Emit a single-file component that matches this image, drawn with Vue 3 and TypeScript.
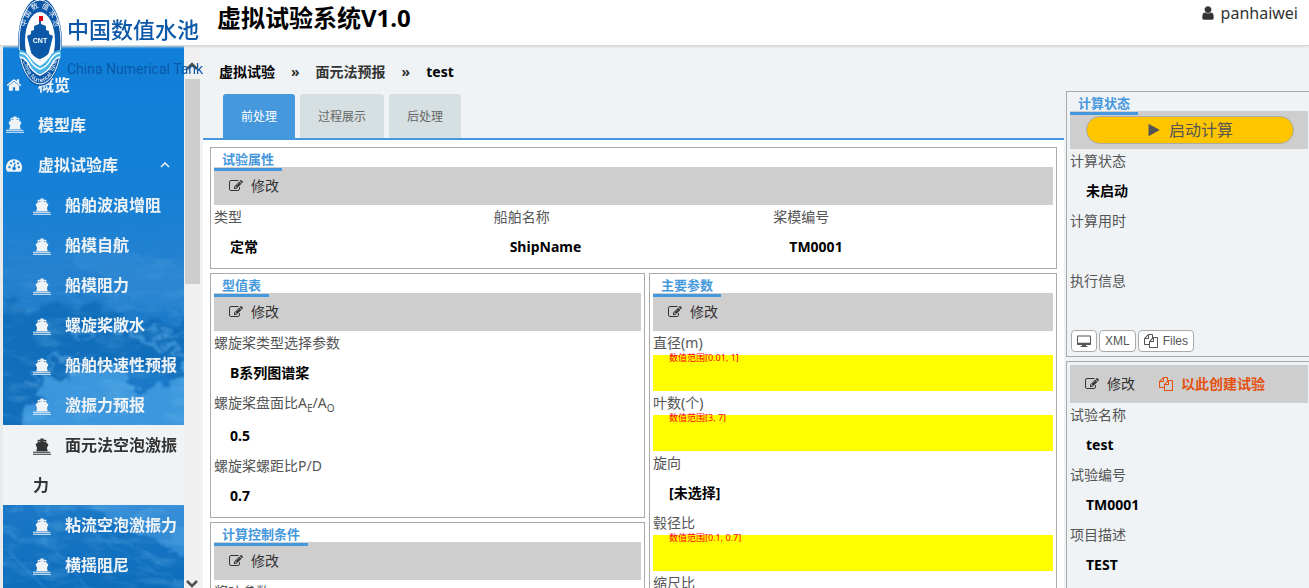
<script setup lang="ts">
import { h, type FunctionalComponent } from 'vue'

const glyphs: Record<string, string> = {
  home: 'M1472 992v480q0 26-19 45t-45 19h-384v-384h-256v384h-384q-26 0-45-19t-19-45v-480q0-1 .5-3t.5-3l575-474 575 474q1 2 1 6zm223-69l-62 74q-8 9-21 11h-3q-13 0-21-7l-692-577-692 577q-12 8-24 7-13-2-21-11l-62-74q-8-10-7-23.5t11-21.5l719-599q32-26 76-26t76 26l244 204v-195q0-14 9-23t23-9h192q14 0 23 9t9 23v408l219 182q10 8 11 21.5t-7 23.5z',
  edit: 'M888 1184l116-116-152-152-116 116v56h96v96h56zm440-720q-16-16-33 1l-350 350q-17 17-1 33t33-1l350-350q17-17 1-33zm80 594v190q0 119-84.5 203.5t-203.5 84.5h-832q-119 0-203.5-84.5t-84.5-203.5v-832q0-119 84.5-203.5t203.5-84.5h832q63 0 117 25 15 7 18 23 3 17-9 29l-49 49q-14 14-32 8-23-6-45-6h-832q-66 0-113 47t-47 113v832q0 66 47 113t113 47h832q66 0 113-47t47-113v-126q0-13 9-22l64-64q15-15 35-7t20 29zm-96-738l288 288-672 672h-288v-288zm444 132l-92 92-288-288 92-92q28-28 68-28t68 28l152 152q28 28 28 68t-28 68z',
  user: 'M1536 1399q0 109-62.5 187t-150.5 78h-854q-88 0-150.5-78t-62.5-187q0-85 8.5-160.5t31.5-152 58.5-131 94-89 134.5-34.5q131 128 313 128t313-128q76 0 134.5 34.5t94 89 58.5 131 31.5 152 8.5 160.5zm-256-887q0 159-112.5 271.5t-271.5 112.5-271.5-112.5-112.5-271.5 112.5-271.5 271.5-112.5 271.5 112.5 112.5 271.5z',
  play: 'M1576 927l-1328 738q-23 13-39.5 3t-16.5-36v-1472q0-26 16.5-36t39.5 3l1328 738q23 13 23 31t-23 31z',
  files: 'M1696 384q40 0 68 28t28 68v1216q0 40-28 68t-68 28h-960q-40 0-68-28t-28-68v-288h-544q-40 0-68-28t-28-68v-672q0-40 20-88t48-76l408-408q28-28 76-48t88-20h416q40 0 68 28t28 68v328q68-40 128-40h416zm-544 213l-299 299h299v-299zm-640-384l-299 299h299v-299zm196 647l316-316v-416h-384v416q0 40-28 68t-68 28h-416v640h512v-256q0-40 20-88t48-76zm956 804v-1152h-384v416q0 40-28 68t-68 28h-416v640h896z',
  desktop: 'M100 200h1592q100 0 100 100v1000q0 100-100 100h-540v130h190v134H450v-134h190v-130H100q-100 0-100-100V300q0-100 100-100zM130 330v800h1532V330z',
  ship: 'M740 60h312v110h190q90 0 90 90v240l170 90q40 20 24 70l-140 330 80 330H326l80-330-140-330q-16-50 24-70l170-90V260q0-90 90-90h190zM560 290v120l336-130 336 130V290zM0 1400l75-60 75 60 75-60 75 60 75-60 75 60 75-60 75 60 75-60 75 60 75-60 75 60 75-60 75 60 75-60 75 60 75-60 75 60 75-60 75 60 75-60 75 60 67-60v100l-67 60-75-60-75 60-75-60-75 60-75-60-75 60-75-60-75 60-75-60-75 60-75-60-75 60-75-60-75 60-75-60-75 60-75-60-75 60-75-60-75 60-75-60-75 60zM0 1570h1792v90H0z',
  dashboard: 'M896 256a896 896 0 0 1 760 1370q-28 38-80 38H216q-52 0-80-38A896 896 0 0 1 896 256zM384 1020a128 128 0 1 0 .1 256 128 128 0 1 0-.1-256zM576 580a128 128 0 1 0 .1 256 128 128 0 1 0-.1-256zM896 390a128 128 0 1 0 .1 256 128 128 0 1 0-.1-256zM1344 580a128 128 0 1 0 .1 256 128 128 0 1 0-.1-256zM1440 1020a128 128 0 1 0 .1 256 128 128 0 1 0-.1-256zM950 740l-90 360a190 190 0 1 0 150 30l90-370z',
}

const Icon: FunctionalComponent<{ name: string }> = (props) =>
  h('svg', { viewBox: '0 0 1792 1792', fill: 'currentColor', 'fill-rule': 'evenodd', 'aria-hidden': 'true' }, [
    h('path', { d: glyphs[props.name] }),
  ])
Icon.props = ['name']

interface Field {
  label: string
  value?: string
  range?: string
}

const subMenu = ['船舶波浪增阻', '船模自航', '船模阻力', '螺旋桨敞水', '船舶快速性预报', '激振力预报', '面元法空泡激振力', '粘流空泡激振力', '横摇阻尼']
const activeMenu = '面元法空泡激振力'
const tabs = ['前处理', '过程展示', '后处理']

const attributes: Field[] = [
  { label: '类型', value: '定常' },
  { label: '船舶名称', value: 'ShipName' },
  { label: '桨模编号', value: 'TM0001' },
]
const params: Field[] = [
  { label: '直径(m)', range: '数值范围[0.01, 1]' },
  { label: '叶数(个)', range: '数值范围[3, 7]' },
  { label: '旋向', value: '[未选择]' },
  { label: '毂径比', range: '数值范围[0.1, 0.7]' },
  { label: '缩尺比', value: '' },
]
const status: Field[] = [
  { label: '计算状态', value: '未启动' },
  { label: '计算用时', value: '' },
  { label: '执行信息', value: '' },
]
const info: Field[] = [
  { label: '试验名称', value: 'test' },
  { label: '试验编号', value: 'TM0001' },
  { label: '项目描述', value: 'TEST' },
]
</script>

<template>
  <div class="app">
    <header class="header">
      <h1>虚拟试验系统V1.0</h1>
      <a class="user" href="#"><Icon name="user" class="icon" />panhaiwei</a>
      <svg class="logo" width="204" height="90" viewBox="0 0 204 90" role="img" aria-label="中国数值水池">
        <defs>
          <path id="arc-top" d="M24 43C24 -4 56 -4 56 43" />
          <path id="arc-bottom" d="M21 44C23 95 57 95 59 44" />
        </defs>
        <ellipse cx="40" cy="42" rx="22" ry="44" fill="#0b57a8" />
        <ellipse cx="40" cy="42" rx="21" ry="42" fill="none" stroke="#fff" stroke-width="1" />
        <ellipse cx="40" cy="41" rx="15" ry="29" fill="#fff" />
        <text class="ring" fill="#fff" font-size="7"><textPath href="#arc-top" startOffset="50%" text-anchor="middle">中 国 数 值 水 池</textPath></text>
        <text class="ring" fill="#fff" font-size="6"><textPath href="#arc-bottom" startOffset="50%" text-anchor="middle">China Numerical Tank</textPath></text>
        <rect x="39" y="16" width="4" height="5" fill="#e60012" />
        <path d="M39 21h2v3l5 2v4l3 1v3l4 2-5 20-8 5-8-5-5-20 4-2v-3l3-1v-4l5-2z" fill="#0b57a8" />
        <path d="M19 50q6-1 10 6 5 7 11 10 7-4 11-11 4-5 10-5v8q-7-1-10 6-4 8-11 10-9-3-12-10-3-6-9-6z" fill="#46b4e8" />
        <path d="M20 53q6 0 9 6 5 8 11 10 7-2 11-10 4-6 9-6M20 57q5 1 8 6 4 9 12 12 8-3 12-11 3-6 8-7M31 54q4 5 9 6 6-2 10-7" fill="none" stroke="#fff" stroke-width="1.500" />
        <text class="ring" x="40" y="43" fill="#fff" font-size="7" font-weight="bold" text-anchor="middle">CNT</text>
        <text class="brand" x="67" y="38">中国数值水池</text>
        <text class="brand-en" x="67" y="74">China Numerical Tank</text>
      </svg>
    </header>

    <div class="body">
      <nav class="sidebar">
        <svg class="sea" preserveAspectRatio="none" viewBox="0 0 181 542" aria-hidden="true">
          <defs>
            <linearGradient id="sea-base" x1="0" y1="0" x2="0" y2="1">
              <stop offset="0" stop-color="#107fd9" />
              <stop offset=".26" stop-color="#1580d6" />
              <stop offset=".42" stop-color="#2581cf" />
              <stop offset=".55" stop-color="#1878c7" />
              <stop offset=".8" stop-color="#1e7bcb" />
              <stop offset="1" stop-color="#0d6dbb" />
            </linearGradient>
            <linearGradient id="fade" x1="0" y1="0" x2="0" y2="1">
              <stop offset="0" stop-color="#fff" stop-opacity="0" />
              <stop offset=".3" stop-color="#fff" />
            </linearGradient>
            <mask id="grain-mask"><rect y="170" width="181" height="372" fill="url(#fade)" /></mask>
            <filter id="rough" x="-10%" y="-10%" width="120%" height="120%">
              <feTurbulence type="fractalNoise" baseFrequency=".05 .08" numOctaves="4" seed="8" result="n" />
              <feDisplacementMap in="SourceGraphic" in2="n" scale="34" />
              <feGaussianBlur stdDeviation="1" />
            </filter>
            <filter id="grain" x="0" y="0" width="100%" height="100%">
              <feTurbulence type="fractalNoise" baseFrequency=".03 .09" numOctaves="4" seed="3" />
              <feColorMatrix values="0 0 0 0 .3  0 0 0 0 .65  0 0 0 0 .92  2.400 0 0 0 -1.100" />
            </filter>
          </defs>
          <rect width="181" height="542" fill="url(#sea-base)" />
          <g filter="url(#rough)">
            <path d="M-10 270Q30 255 70 258T120 272T200 270V340Q140 310 100 325T30 365L-10 400z" fill="#0c6ab8" opacity=".8" />
            <path d="M100 190Q120 220 200 215V265Q140 265 110 240T60 215z" fill="#3c92d9" opacity=".35" />
            <path d="M15 400Q20 335 75 325T130 340T200 310V400z" fill="#409adf" opacity=".9" />
            <path d="M70 290L110 282L145 292L190 285M100 275L155 300L195 310M20 335L60 312L90 318" fill="none" stroke="#4c9fdf" stroke-width="3" opacity=".7" />
            <path d="M80 455Q120 480 150 495T200 520V440H80z" fill="#3b92da" opacity=".8" />
            <path d="M-10 455L60 470L110 500L190 545M-10 480L50 500L90 550M10 510L50 550M30 455L90 475L160 520" fill="none" stroke="#3a90d7" stroke-width="2" opacity=".5" />
          </g>
          <g mask="url(#grain-mask)"><rect y="165" width="181" height="377" filter="url(#grain)" opacity=".22" /></g>
        </svg>
        <ul class="menu">
          <li><a href="#" class="item"><Icon name="home" class="icon" />概览</a></li>
          <li><a href="#" class="item"><Icon name="ship" class="icon wide" />模型库</a></li>
          <li>
            <a href="#" class="item">
              <Icon name="dashboard" class="icon" />虚拟试验库
              <svg class="caret" viewBox="0 0 10 6" aria-hidden="true"><path d="M1 5l4-4 4 4" fill="none" stroke="currentColor" stroke-width="1.500" /></svg>
            </a>
            <ul class="menu">
              <li v-for="name in subMenu" :key="name">
                <a href="#" class="sub" :class="{ active: name === activeMenu }"><Icon name="ship" class="icon" />{{ name }}</a>
              </li>
            </ul>
          </li>
        </ul>
      </nav>
      <div class="scrollbar" aria-hidden="true">
        <svg class="arrow" viewBox="0 0 12 8"><path d="M1 7l5-5 5 5" fill="none" stroke="#505050" stroke-width="2.500" /></svg>
        <div class="thumb"></div>
        <svg class="arrow" viewBox="0 0 12 8"><path d="M1 1l5 5 5-5" fill="none" stroke="#505050" stroke-width="2.500" /></svg>
      </div>

      <main class="main">
        <div class="crumbs">
          <span class="first">虚拟试验</span><span class="sep">»</span><a href="#">面元法预报</a><span class="sep">»</span><span class="first">test</span>
        </div>
        <div class="tabs">
          <button v-for="(tab, i) in tabs" :key="tab" type="button" :class="{ on: i === 0 }">{{ tab }}</button>
        </div>
        <div class="content">
          <section class="panel">
            <h2>试验属性</h2>
            <div class="bar"><button type="button"><Icon name="edit" class="icon" />修改</button></div>
            <dl class="thirds">
              <div v-for="f in attributes" :key="f.label"><dt>{{ f.label }}</dt><dd>{{ f.value }}</dd></div>
            </dl>
          </section>
          <div class="columns">
            <div class="column">
              <section class="panel">
                <h2>型值表</h2>
                <div class="bar"><button type="button"><Icon name="edit" class="icon" />修改</button></div>
                <dl>
                  <dt>螺旋桨类型选择参数</dt>
                  <dd>B系列图谱桨</dd>
                  <dt class="tall">螺旋桨盘面比A<sub>E</sub>/A<sub>O</sub></dt>
                  <dd>0.5</dd>
                  <dt>螺旋桨螺距比P/D</dt>
                  <dd>0.7</dd>
                </dl>
              </section>
              <section class="panel">
                <h2>计算控制条件</h2>
                <div class="bar"><button type="button"><Icon name="edit" class="icon" />修改</button></div>
                <dl><dt>桨叶参数</dt><dd></dd></dl>
              </section>
            </div>
            <section class="panel">
              <h2>主要参数</h2>
              <div class="bar"><button type="button"><Icon name="edit" class="icon" />修改</button></div>
              <dl>
                <template v-for="f in params" :key="f.label">
                  <dt>{{ f.label }}</dt>
                  <dd :class="{ missing: f.range }"><small v-if="f.range">{{ f.range }}</small>{{ f.value }}</dd>
                </template>
              </dl>
            </section>
          </div>
        </div>
      </main>

      <aside class="side">
        <section class="panel">
          <h2>计算状态</h2>
          <div class="bar"><button type="button" class="start"><Icon name="play" class="icon" />启动计算</button></div>
          <dl>
            <template v-for="f in status" :key="f.label"><dt>{{ f.label }}</dt><dd>{{ f.value }}</dd></template>
          </dl>
          <div class="tools">
            <button type="button" aria-label="显示"><Icon name="desktop" class="icon" /></button>
            <button type="button">XML</button>
            <button type="button"><Icon name="files" class="icon" />Files</button>
          </div>
        </section>
        <section class="panel">
          <div class="bar">
            <button type="button"><Icon name="edit" class="icon" />修改</button>
            <button type="button" class="create"><Icon name="files" class="icon" />以此创建试验</button>
          </div>
          <dl>
            <template v-for="f in info" :key="f.label"><dt>{{ f.label }}</dt><dd>{{ f.value }}</dd></template>
          </dl>
        </section>
      </aside>
    </div>
  </div>
</template>

<style>
body {
  margin: 0;
  overflow: hidden;
}
</style>

<style scoped>
* {
  box-sizing: border-box;
}
.app {
  display: flex;
  flex-direction: column;
  height: 100vh;
  overflow: hidden;
  background: #eff3f6;
  color: #555;
  font: 14px/24px "Noto Sans", "Noto Sans CJK SC", sans-serif;
}
button {
  font: inherit;
  color: inherit;
  border: 0;
  padding: 0;
  background: none;
  display: inline-flex;
  align-items: center;
  cursor: pointer;
}
a {
  color: inherit;
  text-decoration: none;
}
.icon {
  width: 14px;
  height: 14px;
  flex: none;
}
.header {
  position: relative;
  z-index: 2;
  flex: none;
  display: flex;
  justify-content: space-between;
  height: 46px;
  padding: 0 11px 0 217px;
  background: #fff;
  border-bottom: 1px solid #d3d7d6;
  box-shadow: 0 1px 2px #d8dcdc;
}
h1 {
  margin: 0;
  font-size: 24px;
  line-height: 36px;
  color: #000;
}
.user {
  display: flex;
  align-items: center;
  gap: 5px;
  height: 26px;
  font-size: 16px;
  color: #333;
}
.user .icon {
  width: 16px;
  height: 16px;
}
.logo {
  position: absolute;
  left: 0;
  top: 0;
}
.ring {
  font-family: "Liberation Sans", "Noto Sans CJK SC", sans-serif;
}
.brand {
  font: 500 22px "Noto Sans CJK SC", sans-serif;
  fill: #0b57a8;
}
.brand-en {
  font: 14px Roboto, sans-serif;
  fill: #0b57a8;
}
.body {
  flex: 1;
  min-height: 0;
  display: flex;
}
.sidebar {
  position: relative;
  flex: none;
  width: 184px;
  padding-top: 19px;
  border-left: 3px solid #e8ebec;
  overflow: hidden;
  font-size: 16px;
  font-weight: bold;
  color: #f0f3f6;
}
.sea {
  position: absolute;
  left: 0;
  top: 0;
  width: 100%;
  height: 100%;
}
.menu {
  position: relative;
  margin: 0;
  padding: 0;
  list-style: none;
}
.item {
  display: flex;
  align-items: center;
  height: 40px;
  padding: 0 14px 0 3px;
}
.item .icon {
  width: 16px;
  height: 16px;
  margin-right: 16px;
}
.item .wide {
  width: 18px;
  height: 18px;
  margin-right: 14px;
}
.caret {
  width: 10px;
  height: 6px;
  margin-left: auto;
}
.sub {
  display: block;
  line-height: 40px;
  padding: 0 4px 0 30px;
}
.sub .icon {
  width: 18px;
  height: 18px;
  margin-right: 14px;
  vertical-align: middle;
}
.sub.active {
  background: #eff3f6;
  color: #333;
}
.scrollbar {
  flex: none;
  display: flex;
  flex-direction: column;
  align-items: center;
  width: 16px;
  padding-top: 16px;
  background: #f0f0f0;
}
.arrow {
  width: 12px;
  height: 8px;
}
.thumb {
  width: 15px;
  height: 205px;
  margin: 9px 0 auto 1px;
  background: #cdcdcd;
}
.main {
  flex: 1;
  min-width: 0;
  margin-left: 3px;
}
.crumbs {
  display: flex;
  gap: 16px;
  padding: 14px 16px 10px;
  font-weight: bold;
  color: #333;
}
.first {
  color: #000;
}
.tabs {
  display: flex;
  gap: 5px;
  padding-left: 20px;
  border-bottom: 2px solid #4698dd;
}
.tabs button {
  height: 44px;
  padding: 2px 18px 0;
  border-radius: 3px 3px 0 0;
  background: #d6dfe1;
  font-size: 12px;
  color: #666;
}
.tabs .on {
  background: #4698dd;
  color: #fff;
}
.content {
  display: grid;
  gap: 4px;
  padding: 7px;
  background: #fff;
}
.columns {
  display: grid;
  grid-template-columns: 16fr 15fr;
  gap: 4px;
}
.column {
  display: grid;
  gap: 4px;
  align-content: start;
}
.panel {
  padding: 3px;
  border: 1px solid #aaa;
}
h2 {
  position: relative;
  width: fit-content;
  margin: 0 0 -4px;
  padding: 0 8px;
  border-bottom: 3px solid #4698dd;
  font-size: 13px;
  line-height: 17px;
  color: #4698dd;
}
.bar {
  display: flex;
  align-items: center;
  gap: 24px;
  height: 38px;
  padding: 0 15px;
  background: #cecece;
  color: #333;
}
.bar button {
  gap: 8px;
}
.bar .create {
  color: #e4500f;
  font-weight: bold;
}
.bar .start {
  flex: 1;
  justify-content: center;
  height: 28px;
  margin: 0 -1px 0 1px;
  border: 1px solid #aaa;
  border-radius: 14px;
  background: #ffc600;
  color: #555;
  font-size: 16px;
}
dl {
  margin: 0;
}
.thirds {
  display: grid;
  grid-template-columns: repeat(3, 1fr);
}
dt {
  height: 24px;
}
dt.tall {
  height: 27px;
}
sub {
  font-size: 10px;
  line-height: 1;
}
dd {
  position: relative;
  height: 36px;
  margin: 0;
  padding-left: 16px;
  line-height: 36px;
  font-weight: bold;
  color: #000;
}
.missing {
  background: #ff0;
}
small {
  position: absolute;
  top: -3px;
  font-size: 9px;
  line-height: 12px;
  font-weight: normal;
  color: #f00;
}
.side {
  flex: none;
  display: grid;
  gap: 4px;
  align-content: start;
  width: 243px;
  margin-left: 2px;
  padding-top: 45px;
}
.side .panel {
  padding-right: 1px;
  padding-bottom: 4px;
  border-right: 0;
}
.side .panel:last-child {
  padding-bottom: 16px;
}
.tools {
  display: flex;
  gap: 2px;
  padding: 1px 1px 0;
}
.tools button {
  gap: 5px;
  height: 22px;
  padding: 0 5px;
  border: 1px solid #aaa;
  border-radius: 4px;
  background: #fff;
  font: 12px "Liberation Sans", sans-serif;
}
</style>
